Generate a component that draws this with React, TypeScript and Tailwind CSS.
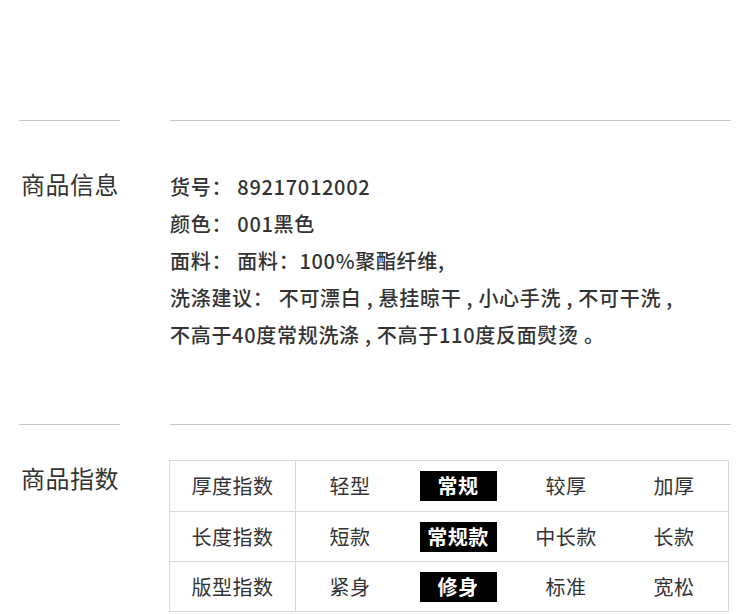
import React from "react";

/**
 * Datas
 */
const infoRows = [
  { label: "货号：", value: "89217012002" },
  { label: "颜色：", value: "001黑色" },
  { label: "面料：", value: "面料：100%聚酯纤维," },
  { label: "洗涤建议：", value: "不可漂白 , 悬挂晾干 , 小心手洗 , 不可干洗 ," },
];

const indexRows = [
  { label: "厚度指数", options: ["轻型", "常规", "较厚", "加厚"], active: 1 },
  { label: "长度指数", options: ["短款", "常规款", "中长款", "长款"], active: 1 },
  { label: "版型指数", options: ["紧身", "修身", "标准", "宽松"], active: 1 },
];

function Divider() {
  return <div className="h-px bg-[#c9c9c9]" />;
}

/**
 * Page
 */
export default function App() {
  return (
    <div className="w-[750px] h-[614px] overflow-hidden bg-white text-[#333] font-['Noto_Sans_CJK_SC','Noto_Sans',sans-serif]">
      {/* 商品信息 */}
      <div className="flex pt-[120px] pl-[19px]">
        <div className="w-[101px]">
          <Divider />
          <h2 className="mt-[45px] text-[24px] leading-[36px] pl-[2px] tracking-[0.5px]">商品信息</h2>
        </div>
        <div className="ml-[50px] w-[561px]">
          <Divider />
          <div className="mt-[47px] text-[20px] leading-[37px] font-medium tracking-[0.7px]">
            {infoRows.map((row) => (
              <p key={row.label}>
                {row.label} {row.value}
              </p>
            ))}
            <p>不高于40度常规洗涤 , 不高于110度反面熨烫 。</p>
          </div>
        </div>
      </div>

      {/* 商品指数 */}
      <div className="flex mt-[71px] pl-[19px]">
        <div className="w-[101px]">
          <Divider />
          <h2 className="mt-[35px] text-[24px] leading-[36px] pl-[2px] tracking-[0.5px]">商品指数</h2>
        </div>
        <div className="ml-[50px] w-[561px]">
          <Divider />
          <div className="mt-[35px] -ml-px w-[560px] border border-[#d9d9d9]">
            {indexRows.map((row, i) => (
              <div
                key={row.label}
                className={"flex h-[50px] items-center text-[20px] tracking-[0.5px] " + (i > 0 ? "border-t border-[#d9d9d9]" : "")}
              >
                <div className="w-[126px] h-full flex items-center justify-center border-r border-[#d9d9d9]">
                  {row.label}
                </div>
                {row.options.map((opt, j) => (
                  <div key={opt} className="w-[108px] flex items-center justify-center">
                    {j === row.active ? (
                      <span className="w-[77px] h-[30px] bg-black text-white font-bold flex items-center justify-center whitespace-nowrap">
                        {opt}
                      </span>
                    ) : (
                      <span>{opt}</span>
                    )}
                  </div>
                ))}
              </div>
            ))}
          </div>
        </div>
      </div>
    </div>
  );
}
